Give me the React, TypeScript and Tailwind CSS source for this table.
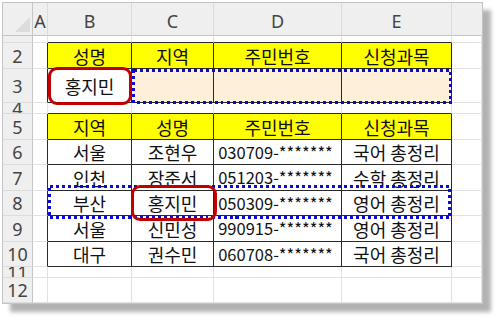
import React from "react";

const letters = ["", "A", "B", "C", "D", "E", ""];
const tableRows = new Set([2, 3, 5, 6, 7, 8, 9, 10]);
const rowsHeights = [7, 26, 34, 11, 26, 25, 26, 25, 26, 25, 11, 25];

const data: Record<number, string[]> = {
  2: ["성명", "지역", "주민번호", "신청과목"],
  3: ["홍지민", "", "", ""],
  5: ["지역", "성명", "주민번호", "신청과목"],
  6: ["서울", "조현우", "030709-*******", "국어 총정리"],
  7: ["인천", "장준서", "051203-*******", "수학 총정리"],
  8: ["부산", "홍지민", "050309-*******", "영어 총정리"],
  9: ["서울", "신민성", "990915-*******", "영어 총정리"],
  10: ["대구", "권수민", "060708-*******", "국어 총정리"],
};

const isTable = (r: number, c: number) => tableRows.has(r) && c >= 2 && c <= 5;

function Cell({ r, c }: { r: number; c: number }) {
  const rightDark = isTable(r, c) || isTable(r, c + 1);
  const bottomDark = isTable(r, c) || isTable(r + 1, c);
  const header = r === 2 || r === 5;
  const peach = r === 3 && c >= 3 && c <= 5;
  const bg = isTable(r, c) && header ? "bg-[#ffff00]" : peach ? "bg-[#fdefd8]" : "bg-white";
  const text = data[r] && c >= 2 && c <= 5 ? data[r][c - 2] : "";
  const numeric = c === 4 && !header;
  return (
    <div
      className={`flex items-center justify-center overflow-hidden whitespace-nowrap border-r border-b leading-none text-[#111] ${
        numeric ? "text-[16.5px] pr-[4px]" : "text-[18px]"
      } ${bg} ${rightDark ? "border-r-[#2a2a2a]" : "border-r-[#e2e2e2]"} ${
        bottomDark ? "border-b-[#2a2a2a]" : "border-b-[#e2e2e2]"
      }`}
    >
      {text}
    </div>
  );
}

export default function App() {
  return (
    <div className="relative w-[500px] h-[320px] bg-white font-['Noto_Sans_CJK_KR','Noto_Sans',sans-serif]">
      <div className="pl-[2px] pt-[2px]">
        <div className="w-[481px] border border-[#c4c4c4] bg-white shadow-[8px_8px_4px_rgba(0,0,0,0.3)]">
          <div className="grid grid-cols-[30px_15px_84px_82px_128px_110px_30px] grid-rows-[33px_7px_26px_34px_11px_26px_25px_26px_25px_26px_25px_11px_25px]">
            {letters.map((l, i) =>
              i === 0 ? (
                <div key="corner" className="relative bg-[#efefef] border-r border-b border-r-[#c6c6c6] border-b-[#c6c6c6]">
                  <svg className="absolute left-0 top-0" width="30" height="33">
                    <polygon points="27,14 27,29 12,29" fill="#dcdcdc" />
                  </svg>
                </div>
              ) : (
                <div
                  key={"h" + i}
                  className={`flex items-center justify-center pt-[3px] bg-[#efefef] border-b border-b-[#c6c6c6] border-r ${
                    i === 6 ? "border-r-[#efefef]" : "border-r-[#dcdcdc]"
                  } font-['Noto_Sans',sans-serif] text-[18px] leading-none text-[#444]`}
                >
                  {l}
                </div>
              )
            )}
            {rowsHeights.map((_, idx) => {
              const r = idx + 1;
              return (
                <React.Fragment key={"r" + r}>
                  <div className="flex items-center justify-center overflow-hidden bg-[#efefef] border-r border-b border-r-[#c6c6c6] border-b-[#dcdcdc] font-['Noto_Sans',sans-serif] text-[18px] leading-none text-[#444]">
                    {r === 1 ? "" : r}
                  </div>
                  {[1, 2, 3, 4, 5, 6].map((c) => (
                    <Cell key={c} r={r} c={c} />
                  ))}
                </React.Fragment>
              );
            })}
          </div>
        </div>
      </div>
      <svg className="pointer-events-none absolute left-0 top-0" width="500" height="320">
        <rect x="133.5" y="70.5" width="317" height="32" fill="none" stroke="#0a0ad0" strokeWidth="3" strokeDasharray="3 3" shapeRendering="crispEdges" />
        <rect x="49.5" y="186.5" width="400" height="31" fill="none" stroke="#0a0ad0" strokeWidth="3" strokeDasharray="3 3" shapeRendering="crispEdges" />
      </svg>
      <div className="pointer-events-none absolute left-[48px] top-[67px] h-[38px] w-[84px] rounded-[9px] border-[3px] border-[#c00000]" />
      <div className="pointer-events-none absolute left-[131px] top-[185px] h-[36px] w-[86px] rounded-[9px] border-[3px] border-[#c00000]" />
    </div>
  );
}
